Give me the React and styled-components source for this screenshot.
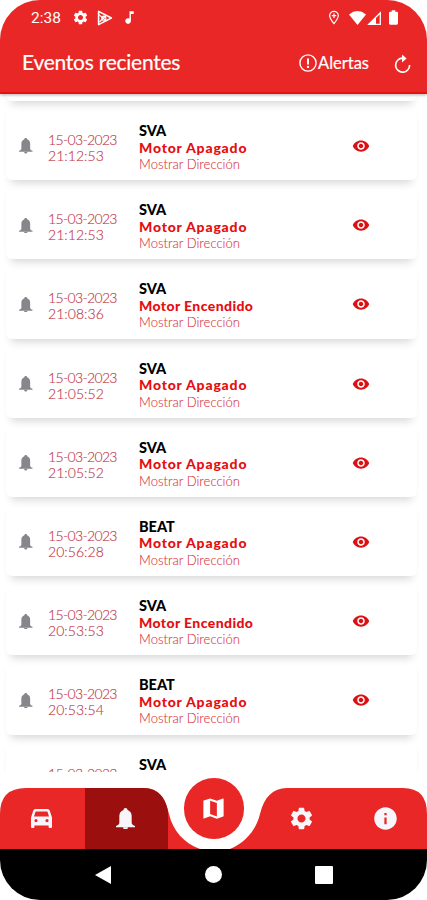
import React from 'react';
import styled, { createGlobalStyle } from 'styled-components';
import {
  MdMap,
  MdSettings,
  MdInfo,
  MdRemoveRedEye,
  MdMusicNote,
} from 'react-icons/md';

const events = [
  { date: '15-03-2023', time: '21:12:53', unit: 'SVA', status: 'Motor Apagado' },
  { date: '15-03-2023', time: '21:12:53', unit: 'SVA', status: 'Motor Apagado' },
  { date: '15-03-2023', time: '21:08:36', unit: 'SVA', status: 'Motor Encendido' },
  { date: '15-03-2023', time: '21:05:52', unit: 'SVA', status: 'Motor Apagado' },
  { date: '15-03-2023', time: '21:05:52', unit: 'SVA', status: 'Motor Apagado' },
  { date: '15-03-2023', time: '20:56:28', unit: 'BEAT', status: 'Motor Apagado' },
  { date: '15-03-2023', time: '20:53:53', unit: 'SVA', status: 'Motor Encendido' },
  { date: '15-03-2023', time: '20:53:54', unit: 'BEAT', status: 'Motor Apagado' },
  { date: '15-03-2023', time: '20:53:54', unit: 'SVA', status: 'Motor Apagado' },
];

const BellIcon = ({ size }) => (
  <svg width={size} height={size * 1.15} viewBox="0 0 20 23" fill="currentColor">
    <path d="M10 0 C11.2 0 12 .8 12.1 2 C15 2.9 16.5 5.4 16.5 8.4 V15.8 C16.7 17.4 18.2 18.2 20 19 V20.4 H0 V19 C1.8 18.2 3.3 17.4 3.5 15.8 V8.4 C3.5 5.4 5 2.9 7.9 2 C8 .8 8.8 0 10 0 Z" />
    <path d="M7.4 20.4 H12.6 C12.4 22 11.4 23 10 23 C8.6 23 7.6 22 7.4 20.4 Z" />
  </svg>
);

const CarIcon = () => (
  <svg width="21" height="19" viewBox="0 0 21 19" fill="currentColor">
    <path
      fillRule="evenodd"
      d="M4.5 0 H16.5 Q18.2 0 18.7 1.6 L21 8.6 V18 Q21 19 20 19 H18.6 Q17.6 19 17.6 18 V16.6 H3.4 V18 Q3.4 19 2.4 19 H1 Q0 19 0 18 V8.6 L2.3 1.6 Q2.8 0 4.5 0 Z M4.6 2.4 L3 7.4 H18 L16.4 2.4 Z M5 10 A1.6 1.6 0 1 0 5 13.2 A1.6 1.6 0 1 0 5 10 Z M16 10 A1.6 1.6 0 1 0 16 13.2 A1.6 1.6 0 1 0 16 10 Z"
    />
  </svg>
);

const PlayGamesIcon = () => (
  <svg width="16" height="16" viewBox="0 0 16 16" fill="none" stroke="#fff" strokeWidth="1.6" strokeLinejoin="round">
    <path d="M1.6 1.4 L14.4 8 L1.6 14.6 Z" />
    <path d="M2 4.6 L9.5 11 M2.5 12 L9 5.5" strokeWidth="1.1" />
    <circle cx="6.8" cy="8.2" r="2.1" strokeWidth="1.1" />
  </svg>
);

const PinIcon = () => (
  <svg width="12" height="15" viewBox="0 0 12 16" fill="none" stroke="#fff" strokeWidth="1.3">
    <path d="M6 14.5 C3 10.8 1.4 8.4 1.4 6 a4.6 4.6 0 0 1 9.2 0 C10.6 8.4 9 10.8 6 14.5 Z" />
    <path d="M6 3.8 V8.4 M3.7 6.1 H8.3" />
  </svg>
);

const WifiIcon = () => (
  <svg width="17" height="14" viewBox="0 0 17 14" fill="#fff">
    <path d="M0 3.4 Q8.5 -3.2 17 3.4 L8.5 14 Z" />
  </svg>
);

const SignalIcon = () => (
  <svg width="14" height="14" viewBox="0 0 14 14">
    <path d="M1.8 13.3 L13.3 1.8 V13.3 Z" fill="none" stroke="#fff" strokeWidth="1.3" />
    <path d="M1 14 L9 6 V14 Z" fill="#fff" />
  </svg>
);

const BatteryIcon = () => (
  <svg width="9" height="15" viewBox="0 0 10 16" fill="#fff">
    <path d="M3 0 H7 V1.6 H8.6 Q10 1.6 10 3 V14.5 Q10 16 8.6 16 H1.4 Q0 16 0 14.5 V3 Q0 1.6 1.4 1.6 H3 Z" />
  </svg>
);

const AlertIcon = () => (
  <svg width="18" height="18" viewBox="0 0 18 18" fill="none" stroke="#fff" strokeWidth="1.4">
    <circle cx="9" cy="9" r="8.1" />
    <path d="M9 4.4 V10.4" strokeWidth="2" />
    <circle cx="9" cy="12.9" r="1.2" fill="#fff" stroke="none" />
  </svg>
);

const ReloadIcon = () => (
  <svg width="17" height="19" viewBox="0 0 17 19" fill="none" stroke="#fff" strokeWidth="1.7">
    <path d="M15.6 11 A7 7 0 1 1 8.6 4.2 H10" />
    <path d="M8 .6 L12.6 4.5 L8 8.4 Z" fill="#fff" stroke="none" />
  </svg>
);

const TabBarShape = () => (
  <Shape width="427" height="61" viewBox="0 0 427 61">
    <path
      d="M0 61 V26 Q0 0 26 0 H143 C160 0 166 12 169 26 C173 43 184 55 200 61 Z"
      fill="#e92726"
    />
    <path d="M85 61 V0 H143 C160 0 166 12 168 24 V61 Z" fill="#9c0f0f" />
    <path
      d="M230 61 C246 54 256 42 260 26 C264 9 273 0 287 0 H403 Q427 0 427 26 V61 Z"
      fill="#e92726"
    />
  </Shape>
);

const EventRow = ({ event }) => (
  <Row>
    <BellCell>
      <BellIcon size={13.5} />
    </BellCell>
    <DateCell>
      <DateText>{event.date}</DateText>
      <TimeText>{event.time}</TimeText>
    </DateCell>
    <Detail>
      <Unit>{event.unit}</Unit>
      <Status $wide={event.status === 'Motor Apagado'}>{event.status}</Status>
      <Address>Mostrar Dirección</Address>
    </Detail>
    <ViewButton>
      <MdRemoveRedEye size={18} />
    </ViewButton>
  </Row>
);

const App = () => {
  return (
    <Screen>
      <GlobalStyle />
      <Header>
        <StatusBar>
          <Clock>2:38</Clock>
          <MdSettings size={17} />
          <PlayGamesIcon />
          <MdMusicNote size={17} />
          <StatusRight>
            <PinIcon />
            <WifiIcon />
            <SignalIcon />
            <BatteryIcon />
          </StatusRight>
        </StatusBar>
        <Toolbar>
          <Title>Eventos recientes</Title>
          <AlertButton>
            <AlertIcon />
            <AlertLabel>Alertas</AlertLabel>
          </AlertButton>
          <ReloadIcon />
        </Toolbar>
      </Header>
      <List>
        <FirstEdge />
        {events.map((event, index) => (
          <EventRow key={index} event={event} />
        ))}
      </List>
      <TabBar>
        <TabBarShape />
        <Tab>
          <CarIcon />
        </Tab>
        <Tab>
          <BellIcon size={19} />
        </Tab>
        <MapButton>
          <MdMap size={27} />
        </MapButton>
        <Tab>
          <MdSettings size={27} />
        </Tab>
        <Tab>
          <MdInfo size={27} />
        </Tab>
      </TabBar>
      <SystemBar>
        <svg width="16" height="18" viewBox="0 0 16 18" fill="#fff">
          <path d="M0 9 L16 0 V18 Z" />
        </svg>
        <HomeDot />
        <RecentSquare />
      </SystemBar>
    </Screen>
  );
};

const GlobalStyle = createGlobalStyle`
  body {
    margin: 0;
    background: #fff;
  }
`;

const Screen = styled.div`
  display: flex;
  flex-direction: column;
  width: 427px;
  height: 900px;
  overflow: hidden;
  border-radius: 40px;
  background: #fff;
  font-family: Lato, sans-serif;
`;

const Header = styled.header`
  position: relative;
  z-index: 1;
  flex: none;
  height: 94px;
  box-sizing: border-box;
  background: #e92726;
  border-bottom: 2px solid #e01214;
  box-shadow: 0 1px 3px rgba(80, 50, 50, 0.4);
  color: #fff;
`;

const StatusBar = styled.div`
  display: flex;
  align-items: center;
  height: 35px;
  padding: 0 29px 0 31px;
  gap: 8px;
`;

const Clock = styled.span`
  width: 33px;
  font-family: Roboto, sans-serif;
  font-size: 15.5px;
`;

const StatusRight = styled.div`
  display: flex;
  align-items: center;
  gap: 1px;
  margin-left: auto;

  svg:first-child {
    margin-right: 8px;
  }

  svg:last-child {
    margin-left: 7px;
  }
`;

const Toolbar = styled.div`
  display: flex;
  align-items: center;
  height: 56px;
  padding: 0 16px 0 22px;
`;

const Title = styled.h1`
  margin: -3px 0 0;
  font-size: 21px;
  font-weight: 400;
  letter-spacing: -0.25px;
  -webkit-text-stroke: 0.2px #fff;
`;

const AlertButton = styled.div`
  display: flex;
  align-items: center;
  margin-left: auto;
  margin-right: 24px;
`;

const AlertLabel = styled.span`
  width: 52px;
  margin: -1px 0 0 1px;
  font-size: 16.5px;
  -webkit-text-stroke: 0.2px #fff;
`;

const List = styled.main`
  flex: none;
  height: 678px;
  overflow: hidden;
`;

// bottom edge of the card that is scrolled under the header
const FirstEdge = styled.div`
  height: 40px;
  margin: -33px 10px 0 6px;
  border-radius: 0 0 6px 6px;
  box-shadow: 0 8px 8px -5px rgba(0, 0, 0, 0.16);
`;

const Row = styled.div`
  display: flex;
  box-sizing: border-box;
  height: 79.2px;
  margin: 0 10px 0 6px;
  border-radius: 0 0 6px 6px;
  box-shadow: 0 8px 8px -5px rgba(0, 0, 0, 0.16);
`;

const BellCell = styled.div`
  width: 42px;
  padding: 37px 0 0 13px;
  box-sizing: border-box;
  color: #85878b;
`;

const DateCell = styled.div`
  width: 91px;
  padding-top: 31px;
  color: #c23a4c;
  font-size: 14px;
  font-weight: 300;
  line-height: 16px;
  -webkit-text-stroke: 0.15px #c23a4c;
`;

const DateText = styled.div`
  letter-spacing: -0.65px;
`;

const TimeText = styled.div`
  letter-spacing: 0.05px;
`;

const Detail = styled.div`
  width: 213px;
  padding-top: 22px;
  line-height: 16.5px;
  white-space: nowrap;
`;

const Unit = styled.div`
  color: #000;
  font-size: 14.5px;
  font-weight: 900;
`;

const Status = styled.div`
  color: #e50e10;
  font-size: 14px;
  font-weight: 900;
  letter-spacing: ${(props) => (props.$wide ? '0.8px' : '0.4px')};
`;

const Address = styled.div`
  color: #d9363b;
  font-size: 13px;
  font-weight: 300;
  letter-spacing: 0.03px;
  -webkit-text-stroke: 0.1px #d9363b;
`;

const ViewButton = styled.div`
  padding-top: 36px;
  color: #dc1113;
`;

const TabBar = styled.nav`
  position: relative;
  display: flex;
  flex: none;
  height: 61px;
  margin-top: 16px;
`;

const Shape = styled.svg`
  position: absolute;
  inset: 0;
`;

const Tab = styled.div`
  position: relative;
  display: flex;
  width: 84px;
  align-items: center;
  justify-content: center;
  color: #f8f6fa;
`;

const MapButton = styled.div`
  position: relative;
  display: flex;
  align-items: center;
  justify-content: center;
  width: 61px;
  height: 61px;
  margin: -10px 15px 0 16px;
  border-radius: 50%;
  background: #e92726;
  color: #fff;
`;

const SystemBar = styled.footer`
  display: flex;
  flex: none;
  align-items: center;
  justify-content: space-between;
  height: 51px;
  padding: 0 94px 0 95px;
  background: #000;
`;

const HomeDot = styled.div`
  width: 17px;
  height: 17px;
  border-radius: 50%;
  background: #fff;
`;

const RecentSquare = styled.div`
  width: 18px;
  height: 18px;
  border-radius: 1px;
  background: #fff;
`;

export default App;
